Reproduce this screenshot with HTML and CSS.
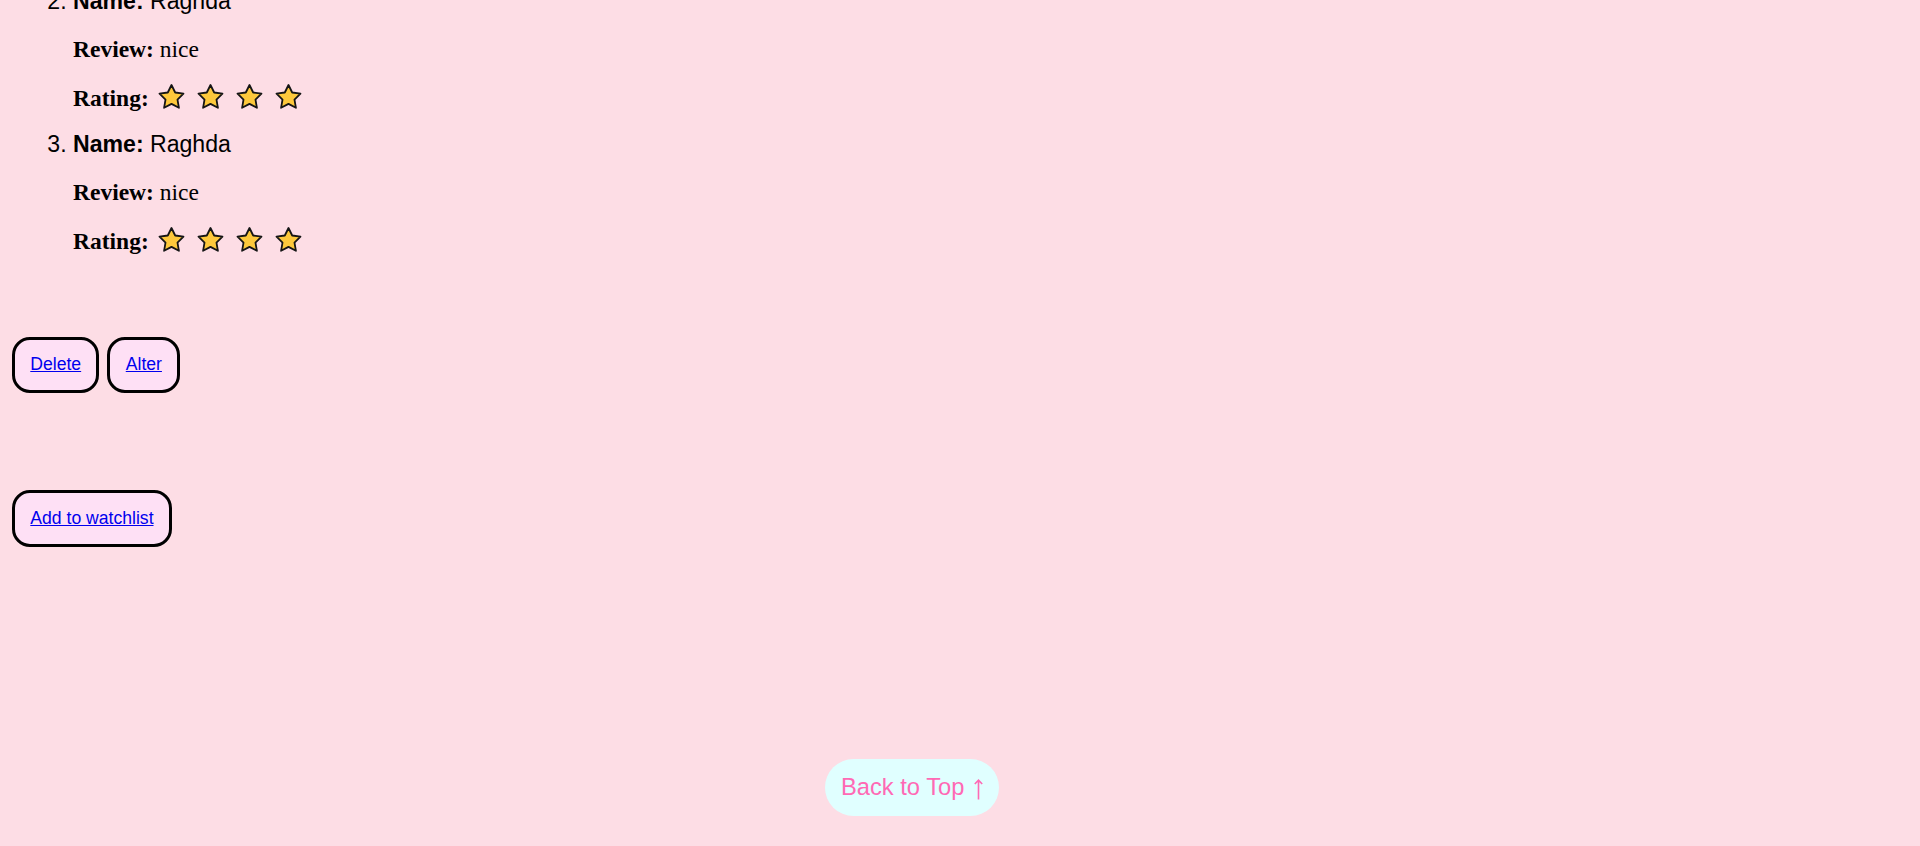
FILE: index.html
```html
<!DOCTYPE html>
<html lang="en">
<head>
<meta charset="utf-8">
<title>Movie Details</title>
<link rel="stylesheet" href="styles.css">
</head>
<body id="top">
<main class="page">
  <section class="movie">
    <h1 class="movie-title">Movie Details</h1>
    <div class="poster"></div>
    <p class="movie-info"><b>Genre:</b> Drama</p>
    <p class="movie-info"><b>Year:</b> 2023</p>
    <p class="movie-info"><b>Description:</b> A movie description.</p>
    <h2 class="reviews-title">Reviews</h2>
  </section>
  <ol class="reviews">
    <li class="review">
      <b>Name:</b> Raghda
      <p class="review-line"><b>Review:</b> nice</p>
      <p class="review-line"><b>Rating:</b> <span class="stars"><svg class="star" viewBox="0 0 26 25"><path d="M13 1 L16.7 8.5 L24.98 9.71 L18.99 15.55 L20.41 23.79 L13 19.9 L5.59 23.79 L7.01 15.55 L1.02 9.71 L9.3 8.5 Z"/></svg><svg class="star" viewBox="0 0 26 25"><path d="M13 1 L16.7 8.5 L24.98 9.71 L18.99 15.55 L20.41 23.79 L13 19.9 L5.59 23.79 L7.01 15.55 L1.02 9.71 L9.3 8.5 Z"/></svg><svg class="star" viewBox="0 0 26 25"><path d="M13 1 L16.7 8.5 L24.98 9.71 L18.99 15.55 L20.41 23.79 L13 19.9 L5.59 23.79 L7.01 15.55 L1.02 9.71 L9.3 8.5 Z"/></svg><svg class="star" viewBox="0 0 26 25"><path d="M13 1 L16.7 8.5 L24.98 9.71 L18.99 15.55 L20.41 23.79 L13 19.9 L5.59 23.79 L7.01 15.55 L1.02 9.71 L9.3 8.5 Z"/></svg></span></p>
    </li>
    <li class="review">
      <b>Name:</b> Raghda
      <p class="review-line"><b>Review:</b> nice</p>
      <p class="review-line"><b>Rating:</b> <span class="stars"><svg class="star" viewBox="0 0 26 25"><path d="M13 1 L16.7 8.5 L24.98 9.71 L18.99 15.55 L20.41 23.79 L13 19.9 L5.59 23.79 L7.01 15.55 L1.02 9.71 L9.3 8.5 Z"/></svg><svg class="star" viewBox="0 0 26 25"><path d="M13 1 L16.7 8.5 L24.98 9.71 L18.99 15.55 L20.41 23.79 L13 19.9 L5.59 23.79 L7.01 15.55 L1.02 9.71 L9.3 8.5 Z"/></svg><svg class="star" viewBox="0 0 26 25"><path d="M13 1 L16.7 8.5 L24.98 9.71 L18.99 15.55 L20.41 23.79 L13 19.9 L5.59 23.79 L7.01 15.55 L1.02 9.71 L9.3 8.5 Z"/></svg><svg class="star" viewBox="0 0 26 25"><path d="M13 1 L16.7 8.5 L24.98 9.71 L18.99 15.55 L20.41 23.79 L13 19.9 L5.59 23.79 L7.01 15.55 L1.02 9.71 L9.3 8.5 Z"/></svg></span></p>
    </li>
    <li class="review">
      <b>Name:</b> Raghda
      <p class="review-line"><b>Review:</b> nice</p>
      <p class="review-line"><b>Rating:</b> <span class="stars"><svg class="star" viewBox="0 0 26 25"><path d="M13 1 L16.7 8.5 L24.98 9.71 L18.99 15.55 L20.41 23.79 L13 19.9 L5.59 23.79 L7.01 15.55 L1.02 9.71 L9.3 8.5 Z"/></svg><svg class="star" viewBox="0 0 26 25"><path d="M13 1 L16.7 8.5 L24.98 9.71 L18.99 15.55 L20.41 23.79 L13 19.9 L5.59 23.79 L7.01 15.55 L1.02 9.71 L9.3 8.5 Z"/></svg><svg class="star" viewBox="0 0 26 25"><path d="M13 1 L16.7 8.5 L24.98 9.71 L18.99 15.55 L20.41 23.79 L13 19.9 L5.59 23.79 L7.01 15.55 L1.02 9.71 L9.3 8.5 Z"/></svg><svg class="star" viewBox="0 0 26 25"><path d="M13 1 L16.7 8.5 L24.98 9.71 L18.99 15.55 L20.41 23.79 L13 19.9 L5.59 23.79 L7.01 15.55 L1.02 9.71 L9.3 8.5 Z"/></svg></span></p>
    </li>
  </ol>
  <div class="actions">
    <a class="btn" href="#">Delete</a>
    <a class="btn" href="#">Alter</a>
  </div>
  <div class="actions watch">
    <a class="btn" href="#">Add to watchlist</a>
  </div>
</main>
<a class="back-top" href="#top">Back to Top <svg class="arrow" viewBox="0 0 9 21"><path d="M4.5 20.5 V1.2 M0.8 5 L4.5 1.2 L8.2 5"/></svg></a>
<script src="script.js"></script>
</body>
</html>
```

FILE: styles.css
```css
html, body {
  margin: 0;
  padding: 0;
}

body {
  background: #fddde5;
  font-family: "Liberation Serif", "Times New Roman", serif;
  color: #000;
}

.page {
  display: flex;
  flex-direction: column;
  align-items: flex-start;
  padding: 0 12px 299.5px;
}

.movie {
  box-sizing: border-box;
  min-height: 3341px;
  padding-top: 20px;
  font-size: 20px;
}

.movie-title {
  margin: 0 0 20px;
}

.poster {
  width: 400px;
  height: 600px;
  border-radius: 10px;
  background: linear-gradient(160deg, #f7b6c8, #c78fb0);
}

.reviews {
  margin: 0;
  padding-left: 61px;
  font-family: "Liberation Sans", Arial, sans-serif;
  font-size: 23.1px;
  line-height: 27px;
}

.review-line {
  font-family: "Liberation Serif", "Times New Roman", serif;
  font-size: 23.5px;
  line-height: 27px;
  margin: 21px 0;
}

.review-line:last-child {
  margin-bottom: 19.5px;
}

.stars {
  margin-left: 3px;
}

.star {
  width: 27px;
  height: 25px;
  margin-right: 12px;
  vertical-align: -3px;
  fill: #fdc83c;
  stroke: #151515;
  stroke-width: 1.8;
  stroke-linejoin: round;
}

.actions {
  display: flex;
  gap: 8px;
  margin-top: 62px;
}

.actions.watch {
  margin-top: 97px;
}

.btn {
  display: inline-block;
  padding: 14.8px 15.3px;
  border: 3px solid #000;
  border-radius: 18px;
  background: #fee0f5;
  color: #0000ee;
  font-family: "Liberation Sans", Arial, sans-serif;
  font-size: 17.6px;
  text-decoration: underline;
}

.back-top {
  position: fixed;
  left: 825px;
  bottom: 30px;
  padding: 15px 16px;
  border-radius: 29px;
  background: #e0ffff;
  color: #ff69b4;
  font-family: "Liberation Sans", Arial, sans-serif;
  font-size: 23.7px;
  text-decoration: none;
}

.arrow {
  width: 9px;
  height: 21px;
  margin-left: 3px;
  vertical-align: -5px;
  fill: none;
  stroke: #ff69b4;
  stroke-width: 1.6;
}
```

FILE: script.js
```js
function toBottom() {
  window.scrollTo(0, document.documentElement.scrollHeight);
}
toBottom();
window.addEventListener('load', toBottom);
```
